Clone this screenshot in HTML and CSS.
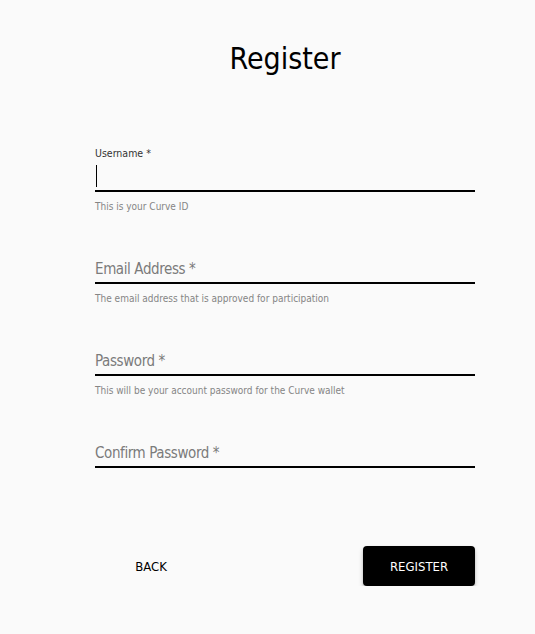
FILE: index.html
```html
<!DOCTYPE html>
<html lang="en">
<head>
    <meta charset="UTF-8">
    <meta name="viewport" content="width=device-width, initial-scale=1.0">
    <title>Register</title>
    <link rel="stylesheet" href="styles.css">
</head>
<body>

<div id="register">
    <h1 class="title">Register</h1>

    <form class="form">
        <div class="field">
            <div class="label">Username *</div>
            <div class="control"><span class="caret"></span></div>
            <div class="helper">This is your Curve ID</div>
        </div>

        <div class="field">
            <div class="label"></div>
            <div class="control"><span class="placeholder">Email Address *</span></div>
            <div class="helper">The email address that is approved for participation</div>
        </div>

        <div class="field">
            <div class="label"></div>
            <div class="control"><span class="placeholder">Password *</span></div>
            <div class="helper">This will be your account password for the Curve wallet</div>
        </div>

        <div class="field">
            <div class="label"></div>
            <div class="control"><span class="placeholder">Confirm Password *</span></div>
        </div>

        <div class="actions">
            <button type="button" class="btn text">BACK</button>
            <button type="button" class="btn primary">REGISTER</button>
        </div>
    </form>
</div>

</body>
</html>
```

FILE: styles.css
```css
body {
    margin: 0;
    background-color: #fafafa;
    font-family: 'DejaVu Sans Condensed', 'Roboto', sans-serif;
    color: #000;
}

#register {
    width: 380px;
    margin-left: 95px;
    padding-top: 37px;
}

.title {
    margin: 0;
    font-size: 30px;
    line-height: 44px;
    font-weight: normal;
    text-align: center;
}

.form {
    margin-top: 64px;
}

.field {
    margin-bottom: 23px;
}

.label {
    height: 16px;
    font-size: 10.5px;
    line-height: 16px;
    color: #333;
}

.control {
    height: 29px;
    border-bottom: 2px solid #000;
    display: flex;
    align-items: flex-end;
}

.caret {
    width: 1px;
    height: 22px;
    background: #000;
    margin-bottom: 3px;
    margin-left: 1px;
}

.placeholder {
    font-size: 15px;
    line-height: 20px;
    letter-spacing: -0.4px;
    margin-bottom: 3px;
    color: #7b7b7b;
}

.helper {
    margin-top: 8px;
    font-size: 10px;
    line-height: 14px;
    color: #858585;
}

.actions {
    display: flex;
    justify-content: space-between;
    margin-top: 78px;
}

.btn {
    width: 112px;
    height: 40px;
    border: none;
    border-radius: 4px;
    font-family: inherit;
    font-size: 13px;
    cursor: pointer;
}

.btn.text {
    background: transparent;
    color: #000;
}

.btn.primary {
    background: #000;
    color: #fff;
    box-shadow: 0 3px 5px rgba(0, 0, 0, 0.2), 0 1px 2px rgba(0, 0, 0, 0.15);
}
```
